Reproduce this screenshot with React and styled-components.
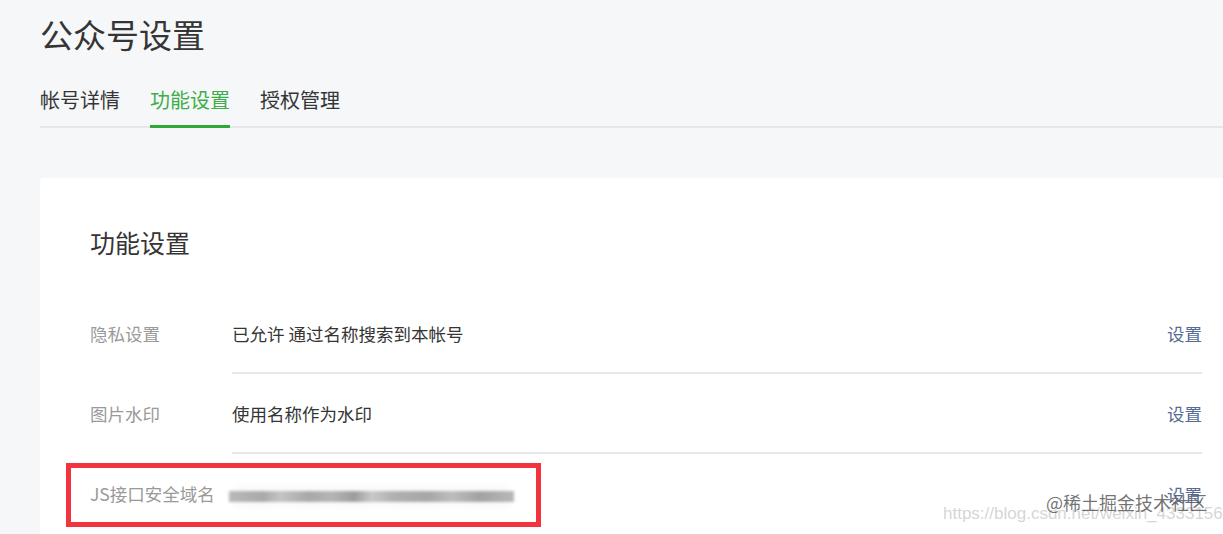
import React from "react";
import styled, { createGlobalStyle } from "styled-components";

const GlobalStyle = createGlobalStyle`
    html, body {
        margin: 0;
        padding: 0;
        background: #f6f7f9;
        overflow: hidden;
    }
    body {
        font-family: "Noto Sans CJK SC", "Noto Sans", sans-serif;
    }
`;

const Page = styled.div`
    position: relative;
    width: 1223px;
    height: 534px;
    padding-left: 40px;
    box-sizing: border-box;
    overflow: hidden;
`;

const PageTitle = styled.h2`
    margin: 0;
    padding-top: 12px;
    font-size: 33px;
    line-height: 44px;
    font-weight: 400;
    color: #353535;
`;

const Tabs = styled.div`
    display: flex;
    gap: 30px;
    margin-top: 30px;
    border-bottom: 2px solid #e5e6e9;
`;

const Tab = styled.div`
    font-size: 20px;
    line-height: 28px;
    padding-bottom: 11px;
    margin-bottom: -2px;
    color: ${(p) => (p.$active ? "#3fae48" : "#353535")};
    border-bottom: 3px solid ${(p) => (p.$active ? "#2fa83a" : "transparent")};
`;

const Card = styled.div`
    margin-top: 50px;
    background: #fff;
    border-radius: 4px 0 0 0;
    padding: 46px 21px 0 50px;
`;

const CardTitle = styled.h3`
    margin: 0 0 34px 0;
    font-size: 25px;
    line-height: 36px;
    font-weight: 400;
    color: #353535;
`;

const Row = styled.div`
    display: flex;
    font-size: 17.5px;
`;

const Label = styled.div`
    width: 142px;
    flex-shrink: 0;
    color: #9a9a9a;
    line-height: 80px;
    white-space: nowrap;
`;

const RowMain = styled.div`
    flex: 1;
    display: flex;
    align-items: center;
    justify-content: space-between;
    height: 80px;
    border-bottom: ${(p) => (p.$last ? "none" : "2px solid #e7e7eb")};
    box-sizing: border-box;
`;

const Value = styled.div`
    color: #353535;
`;

const Action = styled.a`
    color: #576b95;
    text-decoration: none;
`;

const Blurred = styled.div`
    width: 285px;
    height: 11px;
    margin-left: -3px;
    margin-top: 4px;
    filter: blur(1.5px);
    background: linear-gradient(
        90deg,
        #b9b9b9 0%, #a9a9a9 12%, #c4c4c4 18%, #a8a8a8 28%,
        #b5b5b5 36%, #9c9c9c 44%, #c8c8c8 50%, #b0b0b0 58%,
        #a6a6a6 70%, #bdbdbd 78%, #a2a2a2 88%, #b8b8b8 100%
    );
    box-shadow: 0 -8px 6px -4px rgba(0, 0, 0, 0.05), 0 8px 6px -4px rgba(0, 0, 0, 0.05);
`;

const Highlight = styled.div`
    position: absolute;
    left: 66px;
    top: 463px;
    width: 475px;
    height: 64px;
    border: 5px solid #f2343e;
    box-sizing: border-box;
    pointer-events: none;
`;

const Watermark = styled.div`
    position: absolute;
    left: 900px;
    top: 485px;
    width: 323px;
    height: 49px;
    overflow: hidden;
    pointer-events: none;
`;

const WatermarkUrl = styled.span`
    position: absolute;
    left: 43px;
    top: 19px;
    font-family: "Liberation Sans", Arial, sans-serif;
    font-size: 17px;
    color: rgba(200, 200, 200, 0.75);
    white-space: nowrap;
`;

const WatermarkBrand = styled.span`
    position: absolute;
    left: 146px;
    top: 5px;
    font-size: 18px;
    line-height: 24px;
    color: rgba(90, 90, 90, 0.85);
    white-space: nowrap;
`;

const rows = [
    { label: "隐私设置", value: "已允许 通过名称搜索到本帐号" },
    { label: "图片水印", value: "使用名称作为水印" },
    { label: "JS接口安全域名", blurred: true },
];

const App = () => {
    return (
        <>
            <GlobalStyle />
            <Page>
                <PageTitle>公众号设置</PageTitle>
                <Tabs>
                    <Tab>帐号详情</Tab>
                    <Tab $active>功能设置</Tab>
                    <Tab>授权管理</Tab>
                </Tabs>
                <Card>
                    <CardTitle>功能设置</CardTitle>
                    {rows.map((row, i) => (
                        <Row key={row.label}>
                            <Label>{row.label}</Label>
                            <RowMain $last={i === rows.length - 1}>
                                {row.blurred ? <Blurred /> : <Value>{row.value}</Value>}
                                <Action href="#">设置</Action>
                            </RowMain>
                        </Row>
                    ))}
                </Card>
                <Highlight />
                <Watermark>
                    <WatermarkUrl>https://blog.csdn.net/weixin_43331567</WatermarkUrl>
                    <WatermarkBrand>@稀土掘金技术社区</WatermarkBrand>
                </Watermark>
            </Page>
        </>
    );
};

export default App;
